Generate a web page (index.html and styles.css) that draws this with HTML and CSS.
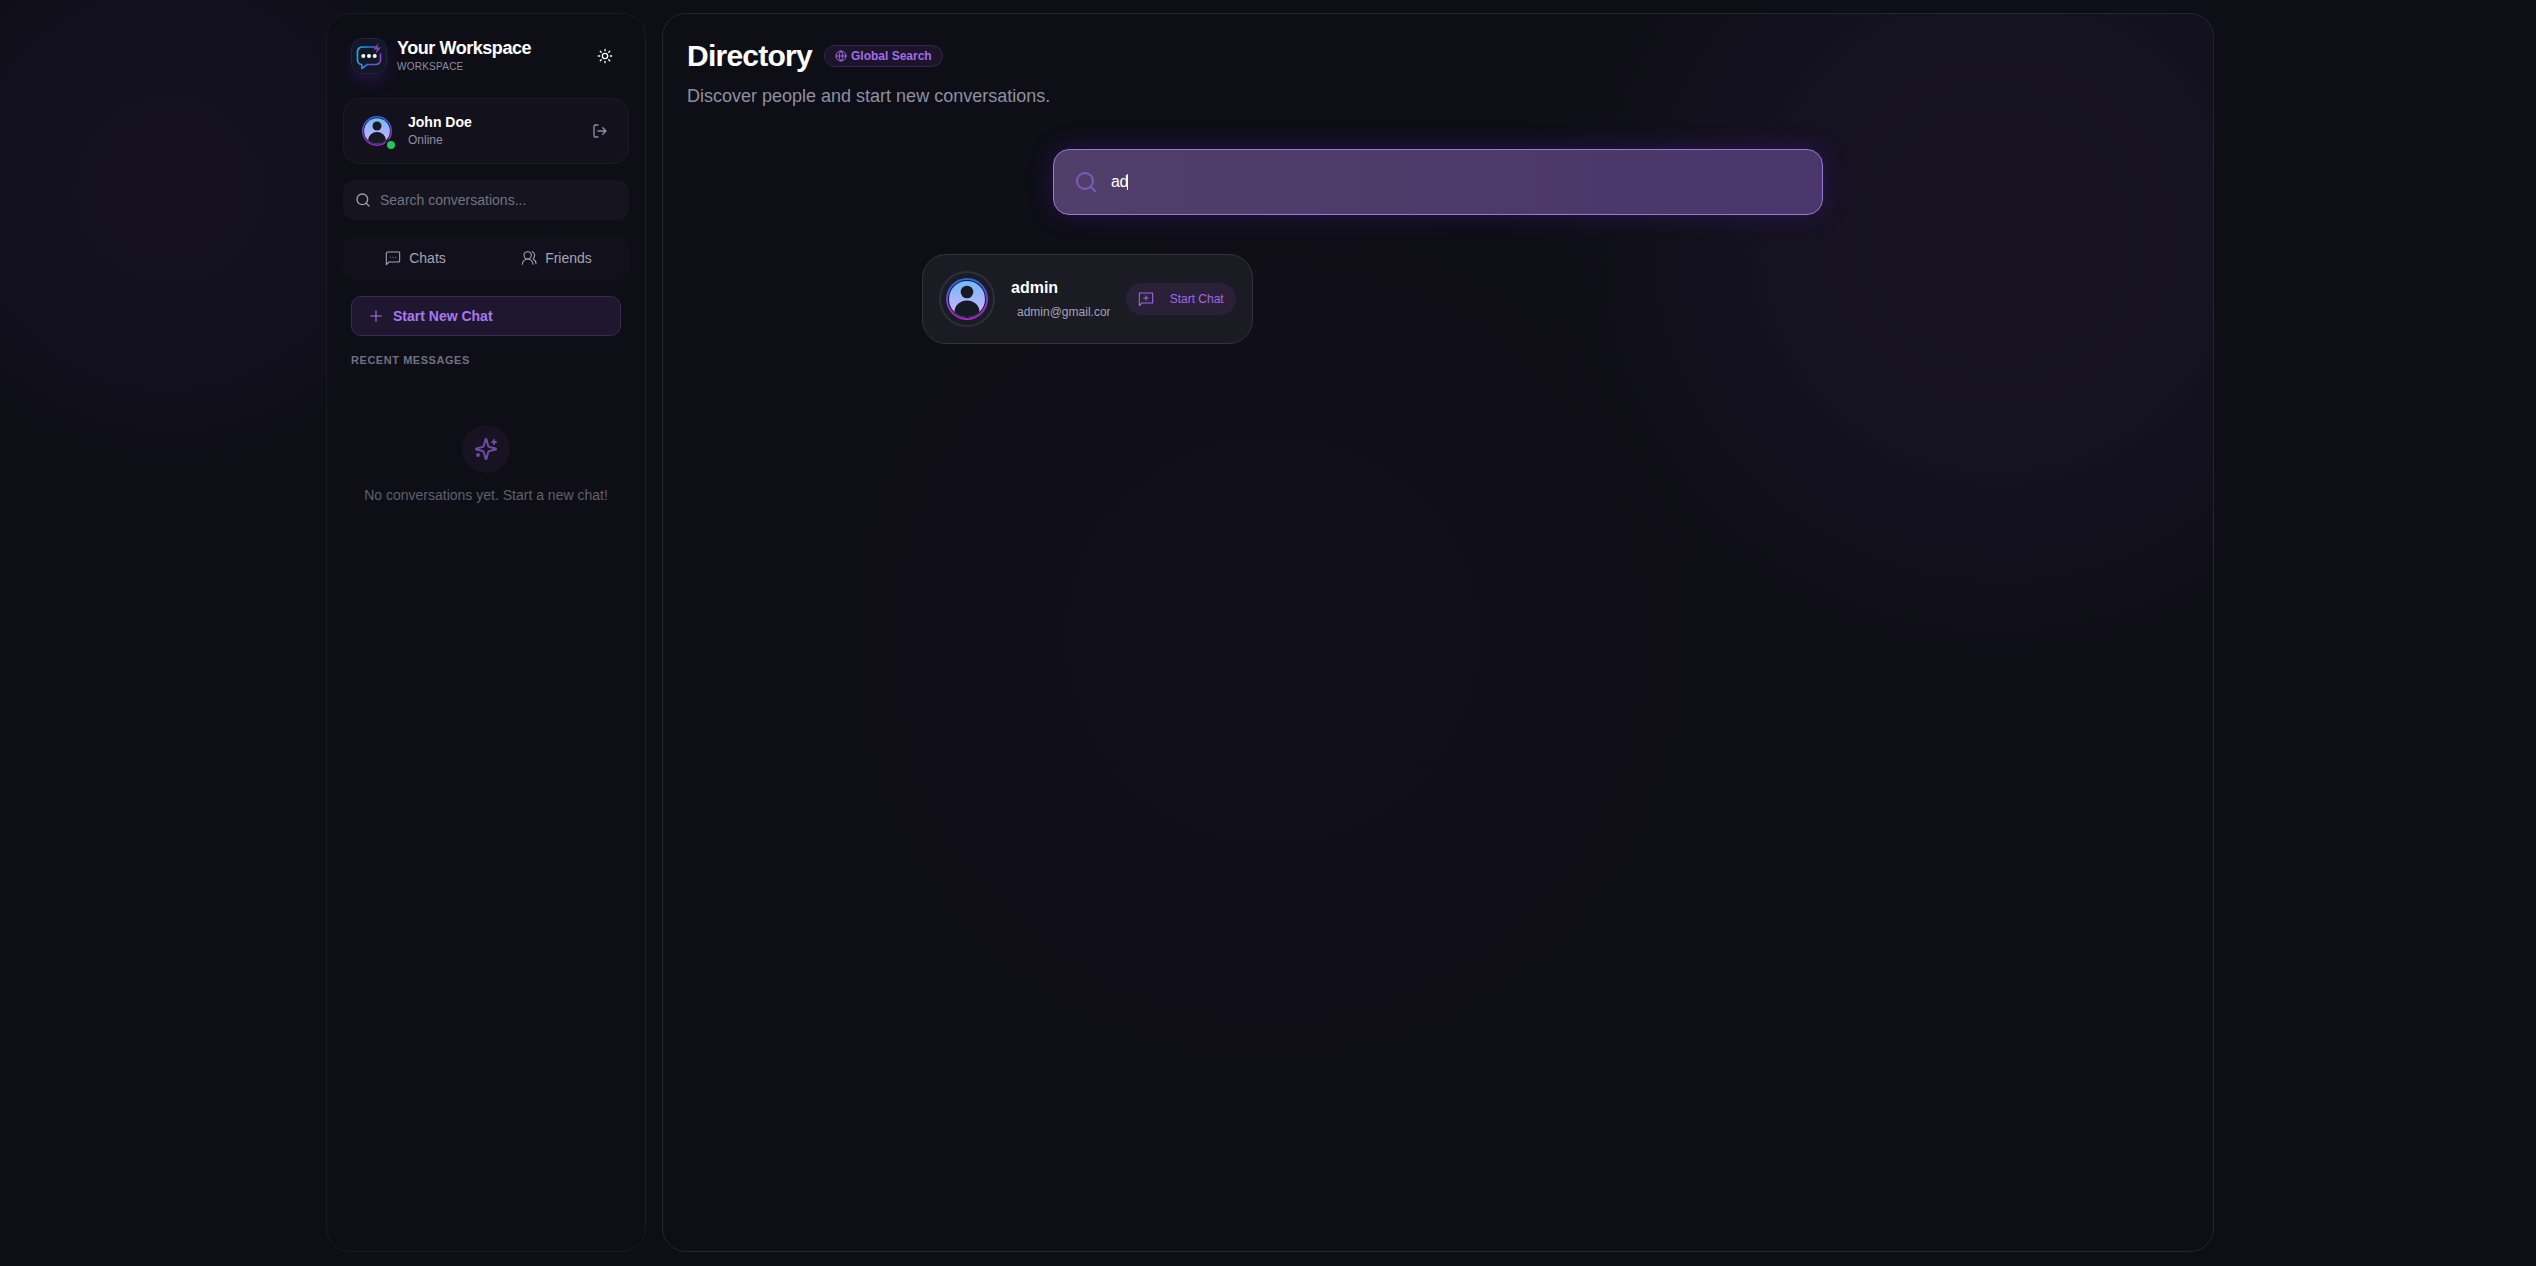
FILE: index.html
```html
<!DOCTYPE html>
<html lang="en">
<head>
<meta charset="utf-8">
<meta name="viewport" content="width=device-width, initial-scale=1">
<title>Directory</title>
<link rel="stylesheet" href="styles.css">
</head>
<body>
<svg class="defs" width="0" height="0" aria-hidden="true">
  <defs>
    <linearGradient id="bubble" x1="0" y1=".2" x2="1" y2=".4"><stop offset="0" stop-color="#12bce0"/><stop offset=".5" stop-color="#3a6fd8"/><stop offset="1" stop-color="#9a3ec8"/></linearGradient>
    <linearGradient id="ring" x1="0" y1="0" x2="0" y2="1"><stop offset="0" stop-color="#1f6fdc"/><stop offset=".45" stop-color="#6d45d8"/><stop offset="1" stop-color="#a426c4"/></linearGradient>
    <linearGradient id="face" x1="0" y1="0" x2="0" y2="1"><stop offset="0" stop-color="#74b8fa"/><stop offset="1" stop-color="#d2b4fc"/></linearGradient>
    <clipPath id="disc"><circle cx="21" cy="21" r="18"/></clipPath>
    <symbol id="person" viewBox="0 0 42 42">
      <circle cx="21" cy="21" r="21" fill="url(#ring)"/>
      <circle cx="21" cy="21" r="19" fill="#171a2c"/>
      <circle cx="21" cy="21" r="18" fill="url(#face)"/>
      <g clip-path="url(#disc)" fill="#151922"><circle cx="21" cy="14" r="6.3"/><path d="M8.500 42V34a12.500 11.500 0 0 1 25 0v8z"/></g>
    </symbol>
    <symbol id="search" viewBox="0 0 24 24"><circle cx="11" cy="11" r="8"/><path d="m21 21-4.300-4.300"/></symbol>
  </defs>
</svg>
<div class="app">
  <aside class="sidebar">
    <header class="brand">
      <svg class="logo" viewBox="0 0 36 36" aria-hidden="true">
        <rect x=".5" y=".5" width="35" height="35" rx="10" fill="#111827" stroke="#232538"/>
        <path d="M24 9H11a4.500 4.500 0 0 0-4.500 4.500v8.500a4.500 4.500 0 0 0 4.300 4.500v4l5.700-4h8.500a4.500 4.500 0 0 0 4.500-4.500v-6" fill="none" stroke="url(#bubble)" stroke-width="1.600" stroke-linejoin="round"/>
        <g fill="#fff"><circle cx="12.300" cy="18" r="2"/><circle cx="18" cy="18" r="2"/><circle cx="23.700" cy="18" r="2"/></g>
        <path d="m27.500 5-5 6.500h3.500l-1.500 4.500 5.500-6.500h-3.500z" fill="#8b3fc4"/>
      </svg>
      <div class="grow">
        <div class="brand-name">Your Workspace</div>
        <div class="brand-kind">WORKSPACE</div>
      </div>
      <button class="icon-button light" aria-label="Switch theme"><svg class="icon" viewBox="0 0 24 24"><circle cx="12" cy="12" r="4"/><path d="M12 2v2M12 20v2M4.930 4.930l1.410 1.410M17.660 17.660l1.410 1.410M2 12h2M20 12h2M6.340 17.660l-1.410 1.410M19.070 4.930l-1.410 1.410"/></svg></button>
    </header>
    <section class="profile">
      <div class="profile-avatar"><svg viewBox="0 0 42 42" aria-hidden="true"><use href="#person"/></svg><i class="status"></i></div>
      <div class="grow">
        <div class="profile-name">John Doe</div>
        <div class="profile-status">Online</div>
      </div>
      <button class="icon-button" aria-label="Log out"><svg class="icon" viewBox="0 0 24 24"><path d="M9 21H5a2 2 0 0 1-2-2V5a2 2 0 0 1 2-2h4M16 17l5-5-5-5M21 12H9"/></svg></button>
    </section>
    <label class="filter">
      <svg class="icon" aria-hidden="true"><use href="#search"/></svg>
      <input type="text" placeholder="Search conversations..." aria-label="Search conversations">
    </label>
    <nav class="tabs">
      <button><svg class="icon" viewBox="0 0 24 24"><path d="M21 3H4a2 2 0 0 0-2 2v17l4-4h14a2 2 0 0 0 2-2V4a1 1 0 0 0-1-1zM8 11h.01M12 11h.01M16 11h.01"/></svg>Chats</button>
      <button><svg class="icon" viewBox="0 0 24 24"><circle cx="10" cy="8" r="5.500"/><path d="M2 21.500a8 8 0 0 1 16 0M17 2.500a6 6 0 0 1 1.500 10M18.500 13.500c2.500 1.500 4 4 4 7"/></svg>Friends</button>
    </nav>
    <button class="new-chat"><svg class="icon" viewBox="0 0 24 24"><path d="M4 12h16M12 4v16"/></svg>Start New Chat</button>
    <h2 class="section-title">RECENT MESSAGES</h2>
    <div class="empty">
      <div class="empty-mark"><svg viewBox="0 0 24 24"><path d="M9.937 15.500A2 2 0 0 0 8.500 14.063l-6.135-1.582a.5.5 0 0 1 0-.962L8.500 9.936A2 2 0 0 0 9.937 8.500l1.582-6.135a.5.5 0 0 1 .963 0L14.063 8.500A2 2 0 0 0 15.500 9.937l6.135 1.581a.5.5 0 0 1 0 .964L15.500 14.063a2 2 0 0 0-1.437 1.437l-1.582 6.135a.5.5 0 0 1-.963 0zM20 3v4M22 5h-4"/><circle cx="4" cy="18" r="1"/></svg></div>
      <p>No conversations yet. Start a new chat!</p>
    </div>
  </aside>
  <main class="directory">
    <header>
      <div class="title-row">
        <h1>Directory</h1>
        <span class="scope"><svg viewBox="0 0 24 24" aria-hidden="true"><circle cx="12" cy="12" r="10"/><path d="M12 2a14.500 14.500 0 0 0 0 20 14.500 14.500 0 0 0 0-20M2 12h20"/></svg>Global Search</span>
      </div>
      <p class="lead">Discover people and start new conversations.</p>
    </header>
    <label class="finder">
      <svg aria-hidden="true"><use href="#search"/></svg>
      <span class="field"><input type="text" value="ad" aria-label="Search people"><i class="caret"></i></span>
    </label>
    <div class="results">
      <article class="person">
        <div class="person-avatar"><svg viewBox="0 0 42 42" aria-hidden="true"><use href="#person"/></svg></div>
        <div class="person-text">
          <h3>admin</h3>
          <p>admin@gmail.com</p>
        </div>
        <button class="start"><svg class="icon" viewBox="0 0 24 24"><path d="M22 3H2v19l4-4h16zM12 7v7M8.500 10.500h7"/></svg>Start Chat</button>
      </article>
    </div>
  </main>
</div>
</body>
</html>
```

FILE: styles.css
```css
* { box-sizing: border-box; }

body {
  margin: 0;
  min-height: 100vh;
  display: flex;
  justify-content: center;
  color: #fff;
  font: 14px/20px "Liberation Sans", Arial, sans-serif;
  background:
    radial-gradient(circle at 1270px 640px, #110f19 0, #100e18 360px, transparent 450px),
    radial-gradient(circle at 170px 190px, #151121 0, #14111f 130px, transparent 290px),
    #0e0e17;
}

h1, h2, h3, p { margin: 0; }

button, input {
  font: inherit;
  color: inherit;
  background: none;
  border: 0;
  padding: 0;
}

input { outline: 0; min-width: 0; }

svg { fill: none; stroke-linecap: round; stroke-linejoin: round; flex: none; }

.defs { position: absolute; }

.icon { width: 16px; height: 16px; stroke: currentColor; stroke-width: 2; }

.grow { flex: 1; }

.app {
  width: 100%;
  max-width: 1924px;
  display: flex;
  gap: 16px;
  padding: 13px 16px 14px 20px;
}

/* Sidebar */

.sidebar {
  width: 320px;
  flex: none;
  display: flex;
  flex-direction: column;
  gap: 16px;
  padding: 16px;
  border: 1px solid #1b1b24;
  border-radius: 24px;
  background: #0e0e17;
}

.brand {
  display: flex;
  align-items: center;
  gap: 10px;
  height: 52px;
  padding: 0 8px;
}

.logo { width: 36px; height: 36px; border-radius: 10px; box-shadow: 0 8px 14px #6d28d933; }

.brand-name { font-size: 18px; line-height: 22px; font-weight: 700; letter-spacing: -0.025em; }

.brand-kind { font-size: 10px; line-height: 16px; letter-spacing: 0.025em; color: #8f8da3; }

.icon-button {
  width: 32px;
  height: 32px;
  display: grid;
  place-items: center;
  color: #8f8da3;
}

.icon-button.light { color: #fff; }

.profile {
  display: flex;
  align-items: center;
  gap: 14px;
  height: 66px;
  padding: 0 12px 0 16px;
  border: 1px solid #1c1b26;
  border-radius: 16px;
  background: #13121c;
}

.profile-avatar { position: relative; width: 34px; height: 34px; padding: 2px; }

.profile-avatar svg { display: block; width: 30px; height: 30px; }

.status {
  position: absolute;
  right: -3px;
  bottom: -3px;
  width: 12px;
  height: 12px;
  border: 2px solid #13121c;
  border-radius: 50%;
  background: #22c55e;
}

.profile-name { font-weight: 700; line-height: 18px; }

.profile-status { font-size: 12px; line-height: 18px; color: #8f8da3; }

.filter {
  display: flex;
  align-items: center;
  gap: 9px;
  height: 40px;
  padding: 0 12px;
  border-radius: 12px;
  background: #15141f;
  color: #a09eb2;
}

.filter input { flex: 1; }

.filter input::placeholder { color: #74727f; opacity: 1; }

.tabs {
  display: grid;
  grid-template-columns: 1fr 1fr;
  column-gap: 4px;
  height: 44px;
  padding: 4px;
  border-radius: 12px;
  background: #12111b;
  color: #a5a3b6;
}

.tabs button {
  display: flex;
  align-items: center;
  justify-content: center;
  gap: 8px;
}

.tabs .icon, .start .icon { stroke-width: 1.600; }

.new-chat {
  display: flex;
  align-items: center;
  gap: 9px;
  height: 40px;
  margin: 0 8px;
  padding: 0 16px;
  border: 1px solid #372a4e;
  border-radius: 10px;
  background: #1f172f;
  color: #a877ee;
  font-weight: 700;
}

.new-chat .icon { stroke-width: 1.600; }

.section-title {
  padding: 0 8px;
  font-size: 11px;
  line-height: 16px;
  letter-spacing: 0.05em;
  color: #716f82;
}

.empty {
  display: flex;
  flex-direction: column;
  align-items: center;
  gap: 12px;
  padding-top: 41px;
  color: #615f6d;
}

.empty-mark {
  width: 48px;
  height: 48px;
  display: grid;
  place-items: center;
  border-radius: 50%;
  background: #171322;
}

.empty-mark svg { width: 24px; height: 24px; stroke: #6e4aa3; stroke-width: 2; }

/* Directory */

.directory {
  flex: 1;
  min-width: 0;
  padding: 24px;
  border: 1px solid #25252f;
  border-radius: 24px;
  background: radial-gradient(circle at calc(100% - 214px) 220px, #171322 0, #151221 220px, #11101a 360px, transparent 490px);
}

.title-row { display: flex; align-items: center; gap: 12px; height: 36px; }

h1 { font-size: 30px; line-height: 36px; letter-spacing: -0.025em; }

.scope {
  display: flex;
  align-items: center;
  gap: 4px;
  height: 22px;
  padding: 0 10px;
  border: 1px solid #37264f;
  border-radius: 11px;
  background: #1c1529;
  color: #a36bea;
  font-size: 12px;
  font-weight: 700;
}

.scope svg { width: 12px; height: 12px; stroke: currentColor; stroke-width: 2; }

.lead { margin-top: 8px; font-size: 18px; line-height: 28px; color: #918fa3; }

.finder {
  display: flex;
  align-items: center;
  gap: 13px;
  max-width: 770px;
  height: 66px;
  margin: 39px auto 0;
  padding: 0 20px;
  border: 1px solid #9a78d4;
  border-radius: 16px;
  background: linear-gradient(90deg, #503f69, #49366b);
  box-shadow: 0 0 24px #6d28d940;
}

.finder svg { width: 24px; height: 24px; stroke: #7c5bb8; stroke-width: 2; }

.field { position: relative; flex: 1; display: flex; }

.field input { flex: 1; font-size: 16px; line-height: 24px; letter-spacing: -0.025em; }

.caret { position: absolute; left: 16px; top: 4px; width: 1px; height: 16px; background: #fff; }

.results {
  display: grid;
  grid-template-columns: repeat(3, minmax(0, 1fr));
  gap: 20px;
  max-width: 1032px;
  margin: 39px auto 0;
}

.person {
  display: flex;
  align-items: center;
  gap: 16px;
  height: 90px;
  padding: 16px;
  border: 1px solid #32323b;
  border-radius: 24px;
  background: #1b1b24;
}

.person-avatar {
  width: 56px;
  height: 56px;
  flex: none;
  display: grid;
  place-items: center;
  border: 2px solid #2f2f37;
  border-radius: 50%;
}

.person-avatar svg { width: 42px; height: 42px; }

.person-text { flex: 1; min-width: 0; padding-top: 2px; }

h3 { font-size: 16px; line-height: 24px; }

.person-text p {
  padding-left: 6px;
  overflow: hidden;
  white-space: nowrap;
  font-size: 12px;
  line-height: 24px;
  color: #a5a3b6;
}

.start {
  display: flex;
  align-items: center;
  gap: 16px;
  height: 32px;
  padding: 0 12px;
  border-radius: 16px;
  background: #2a2138;
  color: #a168e4;
  font-size: 12px;
  white-space: nowrap;
}
```
